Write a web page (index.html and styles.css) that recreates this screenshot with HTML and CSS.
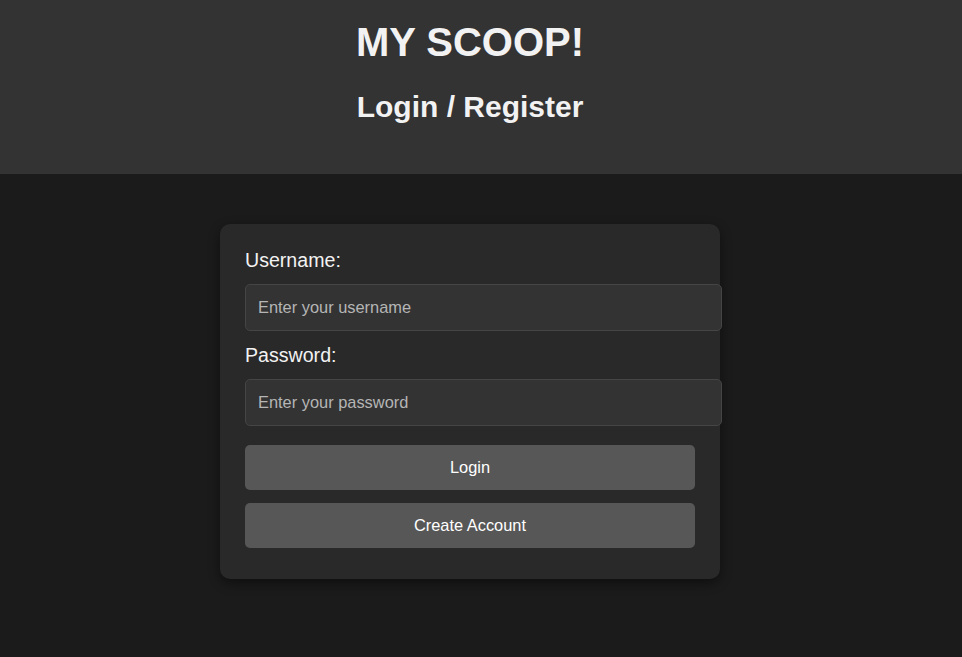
FILE: index.html
```html
<!DOCTYPE html>
<html lang="en">
<head>
<meta charset="utf-8">
<title>MY SCOOP! - Login</title>
<link rel="stylesheet" href="styles.css">
</head>
<body>
<header class="site-header">
  <h1 class="site-title">MY SCOOP!</h1>
  <h2 class="site-subtitle">Login / Register</h2>
</header>
<main class="main">
  <form class="auth-card">
    <label class="field-label" for="username">Username:</label>
    <input class="field-input" id="username" type="text" placeholder="Enter your username">
    <label class="field-label" for="password">Password:</label>
    <input class="field-input" id="password" type="password" placeholder="Enter your password">
    <button class="btn btn-first" type="button">Login</button>
    <button class="btn" type="button">Create Account</button>
  </form>
</main>
</body>
</html>
```

FILE: styles.css
```css
html, body {
  margin: 0;
  padding: 0;
}
body {
  background: #1b1b1b;
  color: #f2f2f2;
  font-family: "Liberation Sans", Arial, sans-serif;
  height: 657px;
  overflow: hidden;
}
.site-header {
  background: #333333;
  height: 174px;
  box-sizing: border-box;
  padding: 21px 22px 0 0;
  text-align: center;
}
.site-title {
  margin: 0;
  font-size: 40px;
  line-height: 42px;
  font-weight: bold;
  color: #f2f2f2;
}
.site-subtitle {
  margin: 27px 0 0;
  font-size: 30px;
  line-height: 34px;
  font-weight: bold;
  color: #f2f2f2;
}
.main {
  display: flex;
  justify-content: center;
  padding: 50px 22px 0 0;
}
.auth-card {
  width: 450px;
  padding: 25px 25px 31px;
  background: #292929;
  border-radius: 10px;
  box-shadow: 0 4px 12px rgba(0, 0, 0, 0.45);
  display: flex;
  flex-direction: column;
  align-items: flex-start;
}
.field-label {
  display: block;
  font-size: 19.6px;
  line-height: 22px;
  color: #f2f2f2;
  margin-bottom: 13px;
}
.field-input {
  width: 451px;
  box-sizing: content-box;
  height: 21px;
  padding: 12px;
  margin: 0 0 13px;
  background: #333333;
  border: 1px solid #454545;
  border-radius: 5px;
  color: #f2f2f2;
  font-family: "Liberation Sans", Arial, sans-serif;
  font-size: 16.4px;
  outline: none;
}
.field-input::placeholder {
  color: #b5b5b5;
}
.btn {
  width: 450px;
  height: 45px;
  margin-top: 13px;
  padding: 0 0 1px;
  background: #575757;
  color: #ffffff;
  border: none;
  border-radius: 5px;
  font-family: "Liberation Sans", Arial, sans-serif;
  font-size: 16.4px;
  cursor: pointer;
}
.btn-first {
  margin-top: 6px;
}
```
